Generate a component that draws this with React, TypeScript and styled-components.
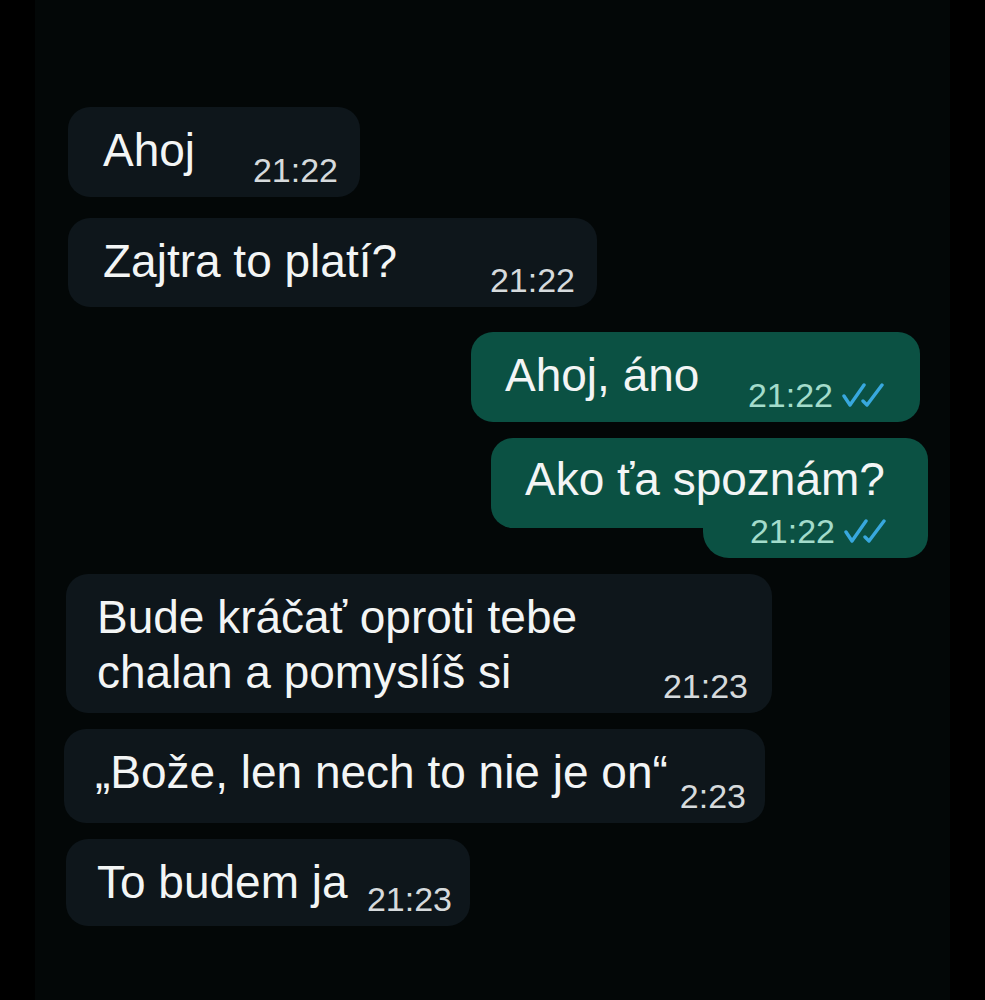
import styled, { createGlobalStyle } from 'styled-components';

const GlobalStyle = createGlobalStyle`
	html, body {
		margin: 0;
		padding: 0;
		background: #000;
	}
	body {
		font-family: 'Liberation Sans', Arial, sans-serif;
		-webkit-font-smoothing: antialiased;
	}
`;

const Page = styled.div`
	width: 985px;
	height: 1000px;
	background: #000;
	display: flex;
	justify-content: center;
	overflow: hidden;
`;

const Chat = styled.div`
	width: 915px;
	height: 100%;
	background: #030707;
	display: flex;
	flex-direction: column;
	padding-top: 107px;
	box-sizing: border-box;
`;

const Row = styled.div<{ $out?: boolean; $gap: number; $edge: number }>`
	display: flex;
	justify-content: ${(p) => (p.$out ? 'flex-end' : 'flex-start')};
	margin-top: ${(p) => p.$gap}px;
	padding-left: ${(p) => (p.$out ? 0 : p.$edge)}px;
	padding-right: ${(p) => (p.$out ? p.$edge : 0)}px;
`;

const Bubble = styled.div<{ $out?: boolean; $width: number; $height: number; $padLeft?: number; $padRight?: number }>`
	box-sizing: border-box;
	width: ${(p) => p.$width}px;
	min-height: ${(p) => p.$height}px;
	display: flex;
	justify-content: space-between;
	align-items: stretch;
	padding: 16px ${(p) => p.$padRight ?? 22}px 0 ${(p) => p.$padLeft ?? 33}px;
	border-radius: 22px;
	background: ${(p) => (p.$out ? '#0b5143' : '#0e161b')};
`;

const Text = styled.div`
	color: #f3f5f5;
	font-size: 46px;
	line-height: 55px;
	white-space: nowrap;
`;

const Meta = styled.div<{ $out?: boolean }>`
	align-self: flex-end;
	display: flex;
	align-items: center;
	gap: 9px;
	padding-bottom: 7px;
	color: ${(p) => (p.$out ? '#a3dccb' : '#d6dadc')};
	font-size: 34px;
	line-height: 40px;
	white-space: nowrap;
`;

const Stack = styled.div<{ $width: number }>`
	width: ${(p) => p.$width}px;
	display: flex;
	flex-direction: column;
	align-items: flex-end;
`;

const TopPart = styled.div`
	box-sizing: border-box;
	width: 100%;
	height: 90px;
	padding: 14px 0 0 34px;
	background: #0b5143;
	border-radius: 22px 22px 0 22px;
`;

const TailPart = styled.div<{ $width: number }>`
	box-sizing: border-box;
	width: ${(p) => p.$width}px;
	height: 30px;
	display: flex;
	justify-content: flex-end;
	padding-right: 40px;
	background: #0b5143;
	border-radius: 0 0 22px 26px;

	${Meta} {
		margin-top: -17px;
		align-self: flex-start;
	}
`;

function Ticks() {
	return (
		<svg width='44' height='25' viewBox='0 0 44 25' fill='none' stroke='#38a8de' strokeWidth='3.4' strokeLinecap='round' strokeLinejoin='round'>
			<path d='M2 13 L8 22 L22 2' />
			<path d='M21 18 L25 22 L40 2' />
		</svg>
	);
}

export default function App() {
	return (
		<>
			<GlobalStyle />
			<Page>
				<Chat>
					<Row $gap={0} $edge={33}>
						<Bubble $width={292} $height={90} $padLeft={35}>
							<Text>Ahoj</Text>
							<Meta>21:22</Meta>
						</Bubble>
					</Row>

					<Row $gap={21} $edge={33}>
						<Bubble $width={529} $height={89} $padLeft={35}>
							<Text>Zajtra to platí?</Text>
							<Meta>21:22</Meta>
						</Bubble>
					</Row>

					<Row $out $gap={25} $edge={30}>
						<Bubble $out $width={449} $height={90} $padLeft={34} $padRight={34}>
							<Text>Ahoj, áno</Text>
							<Meta $out>
								21:22 <Ticks />
							</Meta>
						</Bubble>
					</Row>

					<Row $out $gap={16} $edge={22}>
						<Stack $width={437}>
							<TopPart>
								<Text>Ako ťa spoznám?</Text>
							</TopPart>
							<TailPart $width={225}>
								<Meta $out>
									21:22 <Ticks />
								</Meta>
							</TailPart>
						</Stack>
					</Row>

					<Row $gap={16} $edge={31}>
						<Bubble $width={706} $height={139} $padLeft={31} $padRight={24}>
							<Text>
								Bude kráčať oproti tebe
								<br />
								chalan a pomyslíš si
							</Text>
							<Meta>21:23</Meta>
						</Bubble>
					</Row>

					<Row $gap={16} $edge={29}>
						<Bubble $width={701} $height={94} $padLeft={31} $padRight={19}>
							<Text>„Bože, len nech to nie je on“</Text>
							<Meta>2:23</Meta>
						</Bubble>
					</Row>

					<Row $gap={16} $edge={31}>
						<Bubble $width={404} $height={87} $padLeft={31} $padRight={18}>
							<Text>To budem ja</Text>
							<Meta>21:23</Meta>
						</Bubble>
					</Row>
				</Chat>
			</Page>
		</>
	);
}
